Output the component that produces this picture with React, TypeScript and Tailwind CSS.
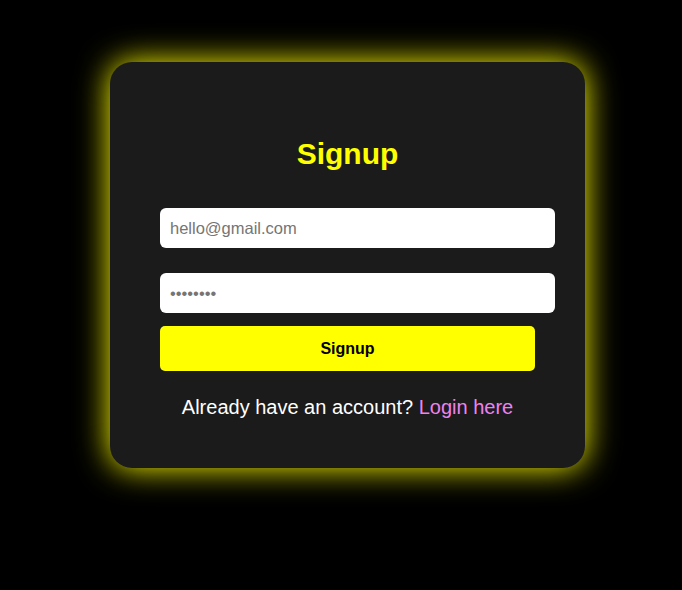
export default function App() {
  return (
    <div
      className="min-h-[590px] w-full bg-black pt-[62px] pl-[110px]"
      style={{ fontFamily: '"Liberation Sans", Arial, sans-serif' }}
    >
      <div className="w-[475px] h-[406px] rounded-[22px] bg-[#1b1b1b] shadow-[0_0_32px_#ffff00] pl-[50px] pt-[75px]">
        <div className="w-[375px] text-center text-[30px] leading-[34px] font-bold text-[#ffff00]">
          Signup
        </div>
        <input
          type="email"
          placeholder="hello@gmail.com"
          className="block mt-[37px] w-[395px] h-[40px] rounded-[6px] bg-white px-[10px] text-[16.5px] text-black placeholder:text-[#757575] outline-none"
        />
        <input
          type="password"
          placeholder="••••••••"
          className="block mt-[25px] w-[395px] h-[40px] rounded-[6px] bg-white px-[10px] text-[16.5px] text-black placeholder:text-[#757575] outline-none"
        />
        <button className="block mt-[13px] w-[375px] h-[45px] rounded-[5px] bg-[#ffff00] text-black text-[16px] font-bold">
          Signup
        </button>
        <div className="mt-[25px] w-[375px] text-center text-[20px] leading-[23px] text-white">
          Already have an account? <span className="text-[#ee82ee]">Login here</span>
        </div>
      </div>
    </div>
  );
}
